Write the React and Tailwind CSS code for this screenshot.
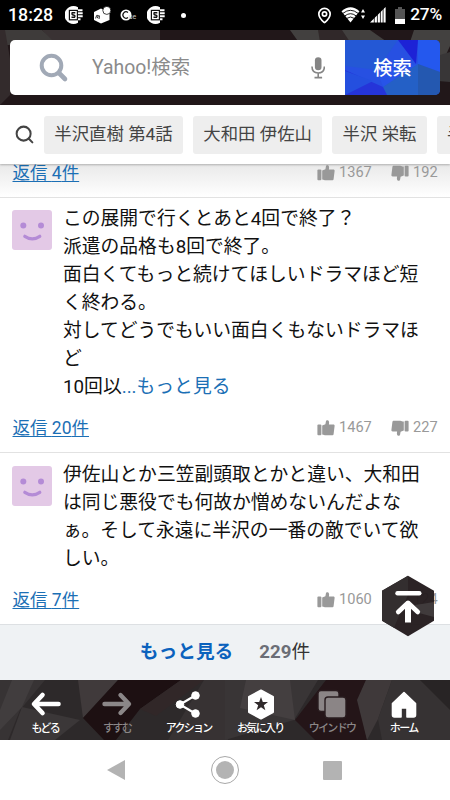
import { MapPin, Search } from 'lucide-react';

const suggestions = ['半沢直樹 第4話', '大和田 伊佐山', '半沢 栄転', '半沢直樹'];

const ThumbUp = ({ className = '' }) => (
  <svg viewBox="0 0 18 16" className={`w-[18px] h-4 shrink-0 ${className}`} fill="currentColor">
    <rect x="0.4" y="4.6" width="4" height="10.6" rx="1" />
    <path d="M5.2 14.4V5.6L8.4 4.2 8.9 1.6C9.1.5 9.8.1 10.6.3c1.2.3 1.6 1.3 1.5 2.5l-.2 1.7h4.4c1 0 1.4.6 1.3 1.4l-1 8c-.1 1-.7 1.4-1.5 1.4H8.8c-1.4 0-2.1-.9-3.6-.9z" />
  </svg>
);

const Avatar = () => (
  <svg viewBox="0 0 40 40" className="w-10 h-10 shrink-0">
    <rect width="40" height="40" rx="3" fill="#e3c9e6" />
    <circle cx="11.3" cy="15.5" r="3" fill="#b48bd6" />
    <circle cx="29" cy="15.5" r="3" fill="#b48bd6" />
    <path d="M12.8 26.3q7.5 5 15 0" fill="none" stroke="#b48bd6" strokeWidth="3.2" strokeLinecap="round" />
  </svg>
);

const CommentFooter = ({ replies, likes, dislikes }) => (
  <div className="flex items-center justify-between h-6 pl-[12.5px] pr-3">
    <a className="text-[17.5px] leading-6 text-[#1b6fb5] underline decoration-1 underline-offset-[2px]">返信 {replies}件</a>
    <div className="flex items-center text-[#999] text-[14.6px]">
      <ThumbUp className="mr-1" />
      <span className="w-[52px]">{likes}</span>
      <ThumbUp className="rotate-180 mr-1" />
      <span className="w-[25px]">{dislikes}</span>
    </div>
  </div>
);

// Rail badge used twice in the notification area
const RailBadge = () => (
  <svg viewBox="0 0 18 18" className="w-[18px] h-[18px]">
    <path d="M13 1.2A9 9 0 1 0 13 16.8" fill="#fff" />
    <path d="M3.5 4.2h14M3.5 13.3h12M12 7.3h5.7M12 10.3h5.7" stroke="#fff" strokeWidth="2" />
    <rect x="4.4" y="4.4" width="8" height="9.4" fill="#fff" stroke="#111" strokeWidth="1.2" />
    <path d="M10.3 6.8H7.2q-.8 2 1.2 2.2 2.4.4 1.1 2.3H6.5" fill="none" stroke="#111" strokeWidth="1.4" />
  </svg>
);

const StatusBar = () => (
  <div className="h-[30px] bg-black text-white flex items-center justify-between pl-2 pr-2">
    <div className="flex items-center">
      <span className="w-[57px] text-[17.8px] font-medium leading-none">18:28</span>
      <RailBadge />
      <svg viewBox="0 0 18 18" className="w-[18px] h-[18px] ml-[10px]">
        <path d="M1 6l7-3.6L16.5 7v7L8 17.4 1 14z" fill="#fff" />
        <circle cx="13.8" cy="4.4" r="4" fill="#fff" stroke="#111" strokeWidth="0.8" />
        <path d="M2.6 12.4l1.1-3q1.6-.6 1.1 1.2l-.4 1.6M5.1 9.8q2-.6 1.2 1.2L6 13" fill="none" stroke="#111" strokeWidth="0.9" />
      </svg>
      <svg viewBox="0 0 18 18" className="w-[18px] h-[18px] ml-[9px]">
        <circle cx="6" cy="9" r="5.5" fill="#fff" />
        <path d="M8 6.4a3.2 3.2 0 1 0 0 5.2" fill="none" stroke="#111" strokeWidth="1.2" />
        <text x="8.6" y="12.6" fontSize="7" fill="#ccc" fontFamily="Roboto, sans-serif">ue</text>
      </svg>
      <span className="ml-[9px] flex"><RailBadge /></span>
      <span className="ml-[16px] w-[5px] h-[5px] rounded-full bg-white" />
    </div>
    <div className="flex items-center">
      <MapPin className="w-[17px] h-[17px] mr-[8px]" strokeWidth={2.4} />
      <svg viewBox="0 0 26 18" className="w-[26px] h-[18px]">
        <path d="M.5 5.2Q9.5-2.6 18.5 5.2L9.5 16.5z" fill="#fff" />
        <path d="M2 7.3q7.5-6 15 0M4 9.8q5.5-4.2 11 0M6 12.3q3.5-2.6 7 0" fill="none" stroke="#000" strokeWidth="0.9" />
        <path d="M20 6.5l2-3.5 2 3.5zM20 9.5l2 3.5 2-3.5z" fill="#fff" />
      </svg>
      <svg viewBox="0 0 16 16" className="w-4 h-4 ml-[3px] mr-[9px]" fill="#fff">
        <path d="M0 15.6L15.6 0v15.6z" />
        <path d="M4.3 8v8M7.4 6v10M10.4 3v13M13.1 0v16" stroke="#000" strokeWidth="0.8" />
      </svg>
      <svg viewBox="0 0 10 17" className="w-[10px] h-[17px] mr-[5px]">
        <path d="M0 2h3V0h4v2h3v10H0z" fill="#555" />
        <path d="M0 12h10v5H0z" fill="#fff" />
      </svg>
      <span className="text-[17.3px] font-medium leading-none tracking-[-0.2px]">27%</span>
    </div>
  </div>
);

const SearchHeader = () => (
  <header className="relative h-[75px] bg-[#211719] px-[10px] pt-[10px]">
    <svg viewBox="0 0 450 75" className="absolute inset-0 w-full h-full">
      <path d="M0 0h42l12 10-54 6z" fill="#3e3b3a" />
      <path d="M42 0h118v12H54z" fill="#393233" />
      <path d="M5 0l7 40-2 25-10 10V0z" fill="#332b2c" />
      <path d="M290 0h80l20 14H300z" fill="#42403f" />
      <path d="M318 0h24l8 12h-30z" fill="#302829" />
      <path d="M414 0h36v16l-12 26-28-30z" fill="#434140" />
      <path d="M450 22v30l-24-2 14-25z" fill="#383637" />
    </svg>
    <div className="relative flex h-[55px] rounded-[5px] overflow-hidden">
      <div className="flex items-center flex-1 bg-white pl-[29px] pr-[19px]">
        <svg viewBox="0 0 30 30" className="w-[30px] h-[30px]" fill="none" stroke="#a1a9b6">
          <circle cx="12.5" cy="12.5" r="9.8" strokeWidth="4" />
          <path d="M20 20l6 6" strokeWidth="4.6" strokeLinecap="round" />
        </svg>
        <span className="ml-[23px] text-[19.4px] text-[#8b8b8b]">Yahoo!検索</span>
        <svg viewBox="0 0 14 22" className="w-[14px] h-[22px] ml-auto mr-[1px]">
          <rect x="3.9" y="0.3" width="6.6" height="13" rx="3.3" fill="#858585" />
          <path d="M1 9.6q0 6.4 6.2 6.4t6.2-6.4M7.2 16v4M3.5 20.6h7.6" fill="none" stroke="#858585" strokeWidth="1.6" />
        </svg>
      </div>
      <div className="relative w-[95px]">
        <svg viewBox="0 0 95 55" className="absolute inset-0 w-full h-full">
          <path d="M0 0h95v55H0z" fill="#2750e2" />
          <path d="M0 0h53L32 30 0 26z" fill="#2458d5" />
          <path d="M53 0h20l-2 24z" fill="#1d22d6" />
          <path d="M73 0h22v32L73 24z" fill="#2458ee" />
          <path d="M32 30l41-6-35 23z" fill="#2754e8" />
          <path d="M73 24l22 8v23H73z" fill="#2458b0" />
          <path d="M38 47l35-23v31H42z" fill="#2460c6" />
          <path d="M0 30l38 17 4 8H0z" fill="#2534d9" />
          <path d="M0 31v24l28-14z" fill="#244fdf" />
        </svg>
        <span className="relative flex items-center justify-center h-full pt-1 text-[19.2px] font-medium text-white">検索</span>
      </div>
    </div>
  </header>
);

const navItems = [
  {
    label: 'もどる',
    icon: <path d="M27.5 14H4M11.5 5L3 14l8.5 9" fill="none" stroke="#fff" strokeWidth="4.6" strokeLinecap="round" strokeLinejoin="round" />,
  },
  {
    label: 'すすむ',
    dim: true,
    icon: <path d="M2.5 14H26M18.5 5L27 14l-8.5 9" fill="none" stroke="#8b8788" strokeWidth="4.4" strokeLinecap="round" strokeLinejoin="round" />,
  },
  {
    label: 'アクション',
    icon: (
      <g fill="#fff" stroke="#fff">
        <path d="M22 5L6 14.5 22 24" fill="none" strokeWidth="2.2" />
        <circle cx="21.5" cy="5.5" r="3.8" />
        <circle cx="6" cy="14.5" r="3.8" />
        <circle cx="21.5" cy="23.5" r="3.8" />
      </g>
    ),
  },
  {
    label: 'お気に入り',
    icon: (
      <>
        <path d="M15 .5l12 6.4v15.2L15 28.5 3 22.1V6.9z" fill="#fff" stroke="#fff" strokeLinejoin="round" strokeWidth="2" />
        <path d="M15 7l1.8 5h5.2l-4.2 3.2 1.6 5.1-4.4-3.1-4.4 3.1 1.6-5.1L8 12h5.2z" fill="#302a2b" />
      </>
    ),
  },
  {
    label: 'ウインドウ',
    dim: true,
    icon: (
      <g fill="#8b8586" stroke="#291c1f" strokeWidth="1.4">
        <rect x="1" y="0.5" width="21" height="21" rx="3" />
        <rect x="8" y="7" width="21" height="21" rx="3" />
      </g>
    ),
  },
  {
    label: 'ホーム',
    icon: <path d="M15 2.5L3.5 13.5V25q0 2 2 2H12v-9h6v9h6.5q2 0 2-2V13.5z" fill="#fff" stroke="#fff" strokeLinejoin="round" strokeWidth="1.6" />,
  },
];

const BottomNav = () => (
  <nav className="relative h-[60px] bg-[#2d292a]">
    <svg viewBox="0 0 450 60" className="absolute inset-0 w-full h-full" preserveAspectRatio="none">
      <path d="M0 0h45L20 30 8 60H0z" fill="#373334" />
      <path d="M12 0h22L22 27 0 50V30z" fill="#413d3e" />
      <path d="M22 27l58 13-25 20H10z" fill="#3b3738" />
      <path d="M78 0h40L83 38z" fill="#403a3b" />
      <path d="M118 0h63l-41 29-24 31H104L83 38z" fill="#1d1012" />
      <path d="M181 0h23l-48 36-16-7z" fill="#312728" />
      <path d="M204 0h24v60h-60z" fill="#373233" />
      <path d="M225 0h93L294 40l-69 20z" fill="#393536" />
      <path d="M246 0h44l5 40-55-12z" fill="#443f40" />
      <path d="M326 0h40l-8 20 9 40h-52l-20-20z" fill="#241518" />
      <path d="M366 0h26l-14 39-11 21-10-40z" fill="#3f393a" />
      <path d="M392 0h28l30 22v38h-68l-4-21z" fill="#363233" />
      <path d="M420 0h30v30z" fill="#282425" />
    </svg>
    <div className="relative grid grid-cols-6 h-full px-[10px]">
      {navItems.map((item) => (
        <div key={item.label} className="flex flex-col items-center pt-[10px]">
          <svg viewBox="0 0 30 29" className="w-[30px] h-[29px] overflow-visible">{item.icon}</svg>
          <span className={`mt-[2px] mr-[1px] text-[11px] leading-4 font-medium tracking-[-1.7px] whitespace-nowrap ${item.dim ? 'text-[#8b8788]' : 'text-white'}`}>
            {item.label}
          </span>
        </div>
      ))}
    </div>
  </nav>
);

const App = () => {
  return (
    <div className="relative w-[450px] h-[800px] overflow-hidden bg-white text-[#111] font-[Roboto,'Noto_Sans_CJK_JP',sans-serif]">
      <StatusBar />
      <SearchHeader />

      {/* Suggested keywords */}
      <div className="relative z-10 flex items-center gap-[10px] h-[59px] pl-[14px] bg-white shadow-[0_1px_2px_rgba(0,0,0,0.25)]">
        <Search className="w-[21px] h-[21px] shrink-0 mr-[-1px] text-[#444]" strokeWidth={2.3} />
        {suggestions.map((word) => (
          <span key={word} className="h-[38px] shrink-0 px-[10.3px] flex items-center bg-[#eee] rounded-[3px] text-[17.4px] text-[#444] whitespace-nowrap">
            {word}
          </span>
        ))}
      </div>

      {/* Comments */}
      <div className="flex flex-col h-[34px] bg-linear-to-b from-[#e9e9e9] to-white border-b border-[#e2e2e2]">
        <div className="-mt-[3px]">
          <CommentFooter replies={4} likes={1367} dislikes={192} />
        </div>
      </div>
      <article className="h-[255px] border-b border-[#e2e2e2]">
        <div className="flex pt-[7px] h-[218px]">
          <div className="pl-3 pr-[11px] pt-[5px]"><Avatar /></div>
          <p className="text-[18.8px] leading-[28px] whitespace-nowrap">
            この展開で行くとあと4回で終了？<br />
            派遣の品格も8回で終了。<br />
            面白くてもっと続けてほしいドラマほど短<br />
            く終わる。<br />
            対してどうでもいい面白くもないドラマほ<br />
            ど<br />
            10回以<span className="text-[#1b6fb5]">...もっと見る</span>
          </p>
        </div>
        <CommentFooter replies={20} likes={1467} dislikes={227} />
      </article>
      <article className="h-[171px]">
        <div className="flex pt-2 h-[135px]">
          <div className="pl-3 pr-[11px] pt-[5px]"><Avatar /></div>
          <p className="text-[18.8px] leading-[28px] whitespace-nowrap">
            伊佐山とか三笠副頭取とかと違い、大和田<br />
            は同じ悪役でも何故か憎めないんだよな<br />
            ぁ。そして永遠に半沢の一番の敵でいて欲<br />
            しい。
          </p>
        </div>
        <CommentFooter replies={7} likes={1060} dislikes={124} />
      </article>
      <div className="flex items-center justify-center gap-[26px] h-[56px] bg-[#eff2f4] border-t border-[#dde0e3] text-[18.7px]">
        <span className="font-bold text-[#0b62bd]">もっと見る</span>
        <span className="text-[#333]"><b className="text-[#6b6e76] font-bold">229</b>件</span>
      </div>

      <BottomNav />

      {/* Android navigation */}
      <div className="flex h-[60px] bg-white text-[#b3b3b3]">
        <svg viewBox="0 0 18 20" className="w-[18px] h-5 ml-[107px] mt-5" fill="currentColor"><path d="M18 0v20L0 10z" /></svg>
        <div className="w-7 h-7 ml-[86px] mt-4 rounded-full border border-[#a8a8a8] flex items-center justify-center">
          <span className="w-[18px] h-[18px] rounded-full bg-[#b3b3b3]" />
        </div>
        <span className="w-[19px] h-[19px] ml-[84px] mt-[20.5px] rounded-[1px] bg-[#b3b3b3]" />
      </div>

      {/* Back to top */}
      <svg viewBox="0 0 54 62" className="absolute left-[380.5px] top-[575px] w-[54px] h-[62px]">
        <path d="M27 .8l26 15v30l-26 15.4L1 45.8v-30z" fill="#241c1e" fillOpacity="0.97" />
        <path d="M27 .8L1 15.8v30l12 7 14-33z" fill="#332e2f" />
        <path d="M53 27L34 30l4 8 15 4z" fill="#403b3c" />
        <path d="M16.5 18.3h21.8" stroke="#fff" strokeWidth="4.4" strokeLinecap="round" />
        <path d="M27 28v19.5" stroke="#fff" strokeWidth="6" />
        <path d="M17.2 37L27 27.8l9.8 9.2" fill="none" stroke="#fff" strokeWidth="4.6" strokeLinecap="round" strokeLinejoin="round" />
      </svg>
    </div>
  );
};

export default App;
